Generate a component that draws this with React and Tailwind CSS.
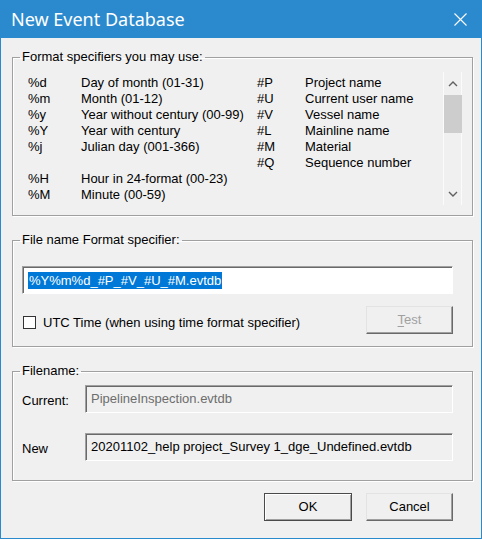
import React from 'react';

const leftRows = [
    ['%d', 'Day of month (01-31)'],
    ['%m', 'Month (01-12)'],
    ['%y', 'Year without century (00-99)'],
    ['%Y', 'Year with century'],
    ['%j', 'Julian day (001-366)'],
    ['', ''],
    ['%H', 'Hour in 24-format (00-23)'],
    ['%M', 'Minute (00-59)'],
];

const rightRows = [
    ['#P', 'Project name'],
    ['#U', 'Current user name'],
    ['#V', 'Vessel name'],
    ['#L', 'Mainline name'],
    ['#M', 'Material'],
    ['#Q', 'Sequence number'],
    ['', ''],
    ['', ''],
];

// campo hundido estilo Windows clásico
const sunken = 'border border-t-[#a0a0a0] border-l-[#a0a0a0] border-b-white border-r-white shadow-[inset_1px_1px_0_#696969]';

const Group = ({ title, className = '', children }) => (
    <fieldset className={`border border-[#a0a0a0] shadow-[1px_1px_0_#fff,inset_1px_1px_0_#fff] ${className}`}>
        <legend className="ml-[7px] px-[2px] leading-[16px]">{title}</legend>
        {children}
    </fieldset>
);

const Chevron = ({ down }) => (
    <svg width="10" height="6" viewBox="0 0 10 6" className="text-[#606060]">
        <path d={down ? 'M1 1 L5 5 L9 1' : 'M1 5 L5 1 L9 5'} fill="none" stroke="currentColor" strokeWidth="1.4" />
    </svg>
);

const App = () => {
    return (
        <div className="w-[482px] h-[539px] bg-[#2b8ace] flex flex-col text-[13px] text-black" style={{ fontFamily: '"Liberation Sans", Arial, sans-serif' }}>
            {/* Barra de título */}
            <div className="h-[38px] flex items-center justify-between pl-[11px] pr-[15px] text-white">
                <span className="text-[18px]" style={{ fontFamily: '"Noto Sans", "Open Sans", sans-serif' }}>New Event Database</span>
                <svg width="13" height="13" viewBox="0 0 13 13">
                    <path d="M0.5 0.5 L12.5 12.5 M12.5 0.5 L0.5 12.5" stroke="white" strokeWidth="1.1" />
                </svg>
            </div>

            <div className="flex-1 mx-[1px] mb-[1px] bg-[#f0f0f0] pl-[11px] pr-[8px] pt-[11px] flex flex-col">
                {/* Especificadores */}
                <Group title="Format specifiers you may use:">
                    <div className="flex pt-[7px] pb-[10px] pl-[15px] pr-[10px]">
                        <div className="flex-1 mt-[3px] flex leading-[16px]">
                            <div className="grid grid-cols-[53px_176px] h-[128px]">
                                {leftRows.map(([code, desc], i) => (
                                    <React.Fragment key={i}>
                                        <span className="h-[16px]">{code}</span>
                                        <span className="h-[16px] whitespace-nowrap">{desc}</span>
                                    </React.Fragment>
                                ))}
                            </div>
                            <div className="grid grid-cols-[48px_120px] h-[128px]">
                                {rightRows.map(([code, desc], i) => (
                                    <React.Fragment key={i}>
                                        <span className="h-[16px]">{code}</span>
                                        <span className="h-[16px] whitespace-nowrap">{desc}</span>
                                    </React.Fragment>
                                ))}
                            </div>
                        </div>
                        <div className="w-[19px] h-[133px] border-l border-r border-[#fbfbfb] flex flex-col items-center">
                            <div className="h-[23px] flex items-center justify-center"><Chevron /></div>
                            <div className="w-[18px] h-[38px] bg-[#cdcdcd]" />
                            <div className="flex-1" />
                            <div className="h-[22px] flex items-center justify-center"><Chevron down /></div>
                        </div>
                    </div>
                </Group>

                {/* Formato del nombre */}
                <Group title="File name Format specifier:" className="mt-[16px]">
                    <div className="pt-[18px] pb-[12px] pl-[9px] pr-[19px] flex flex-col">
                        <div className={`h-[28px] bg-white flex items-center pl-[5px] ${sunken}`}>
                            <span className="bg-[#0078d7] text-white leading-[17px] px-[1px]">%Y%m%d_#P_#V_#U_#M.evtdb</span>
                        </div>
                        <div className="mt-[12px] flex items-center justify-between">
                            <label className="flex items-center gap-[7px] pl-[1px] mt-[5px]">
                                <span className="w-[13px] h-[13px] bg-white border border-[#333]" />
                                <span>UTC Time (when using time format specifier)</span>
                            </label>
                            <button disabled className="w-[87px] h-[28px] bg-[#f0f0f0] border border-t-[#e3e3e3] border-l-[#e3e3e3] border-b-[#696969] border-r-[#696969] shadow-[inset_-1px_-1px_0_#a0a0a0] text-[#a0a0a0]">
                                <span className="underline underline-offset-2">T</span>est
                            </button>
                        </div>
                    </div>
                </Group>

                {/* Nombre de archivo */}
                <Group title="Filename:" className="mt-[16px]">
                    <div className="pt-[6px] pb-[19px] pl-[9px] pr-[19px] flex flex-col gap-[20px]">
                        <div className="flex items-center">
                            <span className="w-[63px] pt-[3px]">Current:</span>
                            <div className={`flex-1 h-[28px] flex items-center pl-[5px] text-[#6d6d6d] ${sunken}`}>PipelineInspection.evtdb</div>
                        </div>
                        <div className="flex items-center">
                            <span className="w-[63px] pt-[3px]">New</span>
                            <div className={`flex-1 h-[28px] flex items-center pl-[5px] ${sunken}`}>20201102_help project_Survey 1_dge_Undefined.evtdb</div>
                        </div>
                    </div>
                </Group>

                {/* Botones */}
                <div className="mt-[12px] flex justify-end gap-[14px] pr-[20px]">
                    <button className="w-[88px] h-[28px] bg-[#f0f0f0] border border-[#4a4a4a] shadow-[inset_1px_1px_0_#fff,inset_-1px_-1px_0_#a0a0a0]">OK</button>
                    <button className="w-[87px] h-[28px] bg-[#f0f0f0] border border-t-[#e3e3e3] border-l-[#e3e3e3] border-b-[#696969] border-r-[#696969] shadow-[inset_-1px_-1px_0_#a0a0a0]">Cancel</button>
                </div>
            </div>
        </div>
    );
};

export default App;
